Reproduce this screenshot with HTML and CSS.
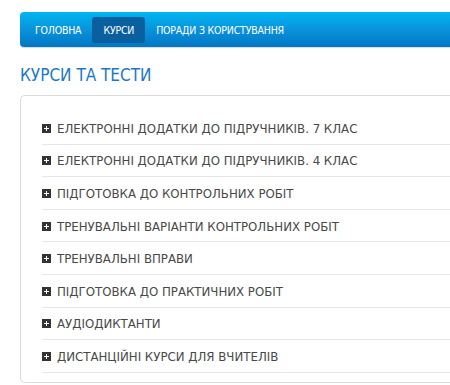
FILE: index.html
```html
<!DOCTYPE html>
<html lang="uk">
<head>
<meta charset="utf-8">
<link rel="stylesheet" href="styles.css">
</head>
<body>
<div class="page">
  <nav class="nav">
    <a class="nav-item">ГОЛОВНА</a>
    <a class="nav-item active">КУРСИ</a>
    <a class="nav-item">ПОРАДИ З КОРИСТУВАННЯ</a>
  </nav>
  <h1 class="title">КУРСИ ТА ТЕСТИ</h1>
  <div class="card">
    <ul class="list">
      <li class="row"><span class="plus"></span>ЕЛЕКТРОННІ ДОДАТКИ ДО ПІДРУЧНИКІВ. 7 КЛАС</li>
      <li class="row"><span class="plus"></span>ЕЛЕКТРОННІ ДОДАТКИ ДО ПІДРУЧНИКІВ. 4 КЛАС</li>
      <li class="row"><span class="plus"></span>ПІДГОТОВКА ДО КОНТРОЛЬНИХ РОБІТ</li>
      <li class="row"><span class="plus"></span>ТРЕНУВАЛЬНІ ВАРІАНТИ КОНТРОЛЬНИХ РОБІТ</li>
      <li class="row"><span class="plus"></span>ТРЕНУВАЛЬНІ ВПРАВИ</li>
      <li class="row"><span class="plus"></span>ПІДГОТОВКА ДО ПРАКТИЧНИХ РОБІТ</li>
      <li class="row"><span class="plus"></span>АУДІОДИКТАНТИ</li>
      <li class="row"><span class="plus"></span>ДИСТАНЦІЙНІ КУРСИ ДЛЯ ВЧИТЕЛІВ</li>
    </ul>
  </div>
</div>
</body>
</html>
```
FILE: styles.css
```css
* { box-sizing: border-box; }
html, body { margin: 0; padding: 0; background: #fff; overflow: hidden; }
body { font-family: "DejaVu Sans Condensed", "DejaVu Sans", sans-serif; }
.page { padding: 12px 0 0 20px; width: 470px; }
.nav {
  height: 35px;
  display: flex;
  align-items: center;
  padding-left: 4px;
  border-radius: 4px 0 0 4px;
  background: linear-gradient(#00b6f2, #0a8fd8 55%, #0077c4);
  box-shadow: 0 1px 1px rgba(0,0,0,0.15);
}
.nav-item {
  color: #fff;
  font-size: 10.5px;
  letter-spacing: -0.2px;
  padding: 0 11px;
  height: 26px;
  line-height: 26px;
  border-radius: 3px;
}
.nav-item.active { background: #0a5f9e; }
.title {
  margin: 18px 0 0;
  font-size: 17px;
  font-weight: normal;
  color: #1a78c8;
  line-height: 20px;
}
.card {
  margin-top: 10px;
  border: 1px solid #dcdcdc;
  border-right: none;
  border-radius: 5px 0 0 5px;
  padding: 16px 0 10px 21px;
  height: 288px;
}
.list { list-style: none; margin: 0; padding: 0; }
.row {
  height: 32.6px;
  border-bottom: 1px solid #e6e6e6;
  display: flex;
  align-items: center;
  font-size: 13.1px;
  color: #484848;
  padding-top: 1px;
}
.plus {
  width: 9px;
  height: 9px;
  background: #333;
  margin-right: 6px;
  position: relative;
  flex: none;
}
.plus::before, .plus::after { content: ""; position: absolute; background: #fff; }
.plus::before { left: 2px; top: 4px; width: 5px; height: 1px; }
.plus::after { left: 4px; top: 2px; width: 1px; height: 5px; }
```
